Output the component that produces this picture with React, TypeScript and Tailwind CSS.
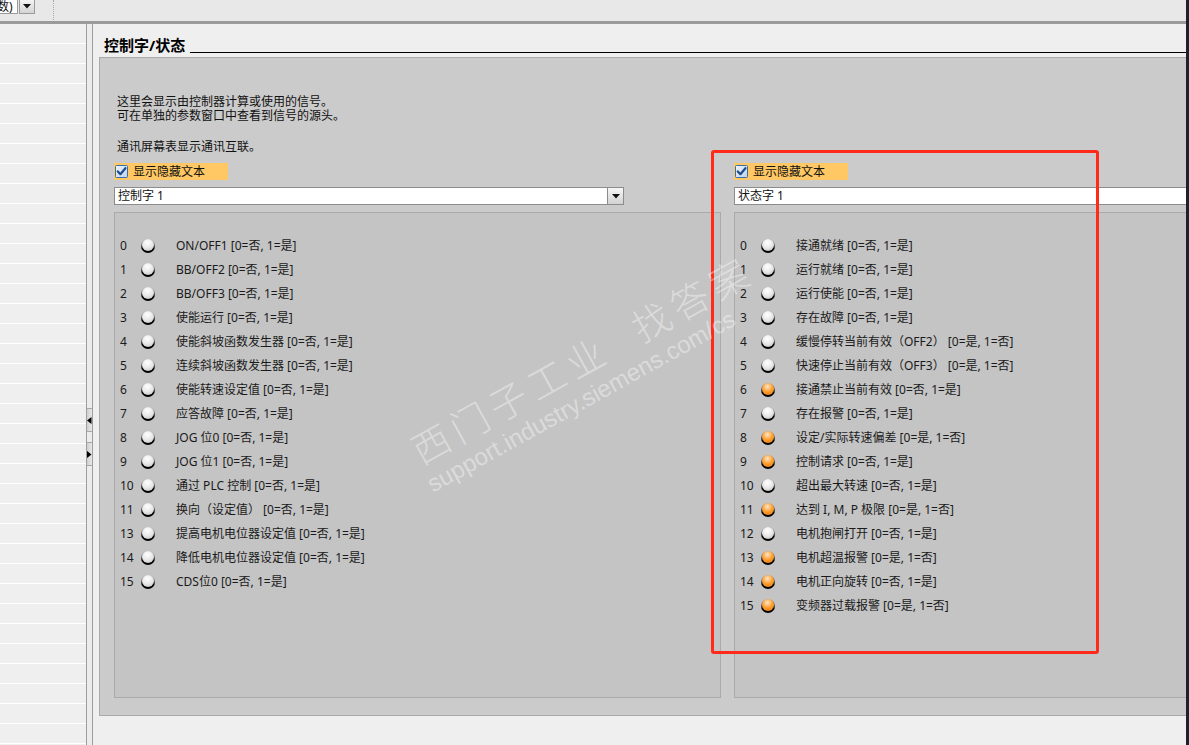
import React from 'react'

type Item = { n: number; label: string; on?: boolean }

const CONTROL: Item[] = [
  { n: 0, label: 'ON/OFF1 [0=否, 1=是]' },
  { n: 1, label: 'BB/OFF2 [0=否, 1=是]' },
  { n: 2, label: 'BB/OFF3 [0=否, 1=是]' },
  { n: 3, label: '使能运行 [0=否, 1=是]' },
  { n: 4, label: '使能斜坡函数发生器 [0=否, 1=是]' },
  { n: 5, label: '连续斜坡函数发生器 [0=否, 1=是]' },
  { n: 6, label: '使能转速设定值 [0=否, 1=是]' },
  { n: 7, label: '应答故障 [0=否, 1=是]' },
  { n: 8, label: 'JOG 位0 [0=否, 1=是]' },
  { n: 9, label: 'JOG 位1 [0=否, 1=是]' },
  { n: 10, label: '通过 PLC 控制 [0=否, 1=是]' },
  { n: 11, label: '换向（设定值） [0=否, 1=是]' },
  { n: 13, label: '提高电机电位器设定值 [0=否, 1=是]' },
  { n: 14, label: '降低电机电位器设定值 [0=否, 1=是]' },
  { n: 15, label: 'CDS位0 [0=否, 1=是]' },
]

const STATUS: Item[] = [
  { n: 0, label: '接通就绪 [0=否, 1=是]' },
  { n: 1, label: '运行就绪 [0=否, 1=是]' },
  { n: 2, label: '运行使能 [0=否, 1=是]' },
  { n: 3, label: '存在故障 [0=否, 1=是]' },
  { n: 4, label: '缓慢停转当前有效（OFF2） [0=是, 1=否]' },
  { n: 5, label: '快速停止当前有效（OFF3） [0=是, 1=否]' },
  { n: 6, label: '接通禁止当前有效 [0=否, 1=是]', on: true },
  { n: 7, label: '存在报警 [0=否, 1=是]' },
  { n: 8, label: '设定/实际转速偏差 [0=是, 1=否]', on: true },
  { n: 9, label: '控制请求 [0=否, 1=是]', on: true },
  { n: 10, label: '超出最大转速 [0=否, 1=是]' },
  { n: 11, label: '达到 I, M, P 极限 [0=是, 1=否]', on: true },
  { n: 12, label: '电机抱闸打开 [0=否, 1=是]' },
  { n: 13, label: '电机超温报警 [0=是, 1=否]', on: true },
  { n: 14, label: '电机正向旋转 [0=否, 1=是]', on: true },
  { n: 15, label: '变频器过载报警 [0=是, 1=否]', on: true },
]

// round indicator: grey ring fading to a black crescent at the bottom
function Led({ on }: { on?: boolean }) {
  return (
    <span className="relative block h-[14px] w-[14px] shrink-0 rounded-full bg-[linear-gradient(#a8a8a8,#6a6a6a_40%,#000_70%)]">
      <span
        className={`absolute left-[1px] top-0 h-[12px] w-[12px] rounded-full ${
          on
            ? 'bg-[radial-gradient(circle_at_45%_30%,#ffe4bf,#ff9c2e_50%,#e47506)]'
            : 'bg-[radial-gradient(circle_at_45%_30%,#ffffff,#e8e8e8_50%,#b8b8b8)]'
        }`}
      />
    </span>
  )
}

function CheckBox() {
  return (
    <svg width="13" height="13" viewBox="0 0 13 13" className="shrink-0">
      <defs>
        <linearGradient id="cbg" x1="0" y1="0" x2="1" y2="1">
          <stop offset="0" stopColor="#eef4fb" />
          <stop offset="1" stopColor="#bfd3ea" />
        </linearGradient>
      </defs>
      <rect x="0.5" y="0.5" width="12" height="12" rx="1" fill="url(#cbg)" stroke="#3c6ea6" />
      <path d="M2.8 6.4 L5.4 9.2 L10.4 3.2" fill="none" stroke="#1d4c8f" strokeWidth="2.2" strokeLinecap="round" strokeLinejoin="round" />
    </svg>
  )
}

function DropArrow() {
  return (
    <div className="flex h-full w-[16px] items-center justify-center border-l border-[#8c8c8c] bg-[linear-gradient(#f6f6f6,#d2d2d2)]">
      <svg width="8" height="5" viewBox="0 0 8 5">
        <path d="M0 0 H8 L4 4.5 Z" fill="#111" />
      </svg>
    </div>
  )
}

function Column({ title, items }: { title: string; items: Item[] }) {
  return (
    <div className="flex w-[607px] shrink-0 flex-col">
      <div className="flex h-[17px] w-[114px] items-center gap-[5px] bg-[#ffc864] pl-[1px]">
        <CheckBox />
        <span>显示隐藏文本</span>
      </div>
      <div className="mt-[7px] flex h-[18px] w-[510px] items-center border border-[#8c8c8c] bg-white">
        <span className="flex-1 pl-[3px] leading-[16px]">{title}</span>
        <DropArrow />
      </div>
      <div className="mt-[7px] h-[486px] border border-[#aaaaaa] bg-[#c4c4c4] pl-[5px] pt-[21px]">
        {items.map((it) => (
          <div key={it.n} className="flex h-[24px] items-center">
            <span className="w-[21px] text-[#1a1a1a]">{it.n}</span>
            <Led on={it.on} />
            <span className="ml-[21px] whitespace-nowrap text-[#1a1a1a]">{it.label}</span>
          </div>
        ))}
      </div>
    </div>
  )
}

export default function App() {
  return (
    <div className="relative flex h-[745px] w-[1189px] overflow-hidden bg-[#efefef] font-['Noto_Sans','Noto_Sans_CJK_SC',sans-serif] text-[12px] text-[#111]">
      <div className="flex min-w-0 flex-1 flex-col">
        {/* top toolbar */}
        <div className="flex h-[21px] shrink-0 items-start bg-[#e8e8e8]">
          <div className="flex h-[15px] -translate-y-[1px] items-center">
            <div className="flex h-full w-[18px] items-center border border-l-0 border-[#9a9a9a] bg-white leading-none">
              <span className="-ml-[3px]">数)</span>
            </div>
            <div className="ml-[1px] flex h-full w-[16px] items-center justify-center border border-[#9a9a9a] bg-[linear-gradient(#f4f4f4,#d4d4d4)]">
              <svg width="8" height="5" viewBox="0 0 8 5">
                <path d="M0 0 H8 L4 4.5 Z" fill="#111" />
              </svg>
            </div>
          </div>
          <div className="ml-[18px] h-[20px] border-l border-dotted border-[#a8a8a8]" />
        </div>
        <div className="h-[3px] shrink-0 bg-[#9a9a9a]" />

        <div className="flex min-h-0 flex-1">
          {/* left tree */}
          <div className="flex w-[87px] shrink-0 flex-col border-r border-[#9d9d9d] bg-[#efefef]">
            {Array.from({ length: 36 }).map((_, i) => (
              <div key={i} className="h-[20px] shrink-0 border-b border-white" />
            ))}
          </div>
          {/* splitter */}
          <div className="flex w-[6px] shrink-0 flex-col border-r border-[#9d9d9d] bg-[#ececec]">
            <div className="h-[384px]" />
            <div className="flex h-[24px] items-center border-y border-[#a8a8a8] bg-[linear-gradient(90deg,#cfcfcf,#e8e8e8)]">
              <svg width="5" height="7" viewBox="0 0 5 7">
                <path d="M4.5 0 V7 L0 3.5 Z" fill="#000" />
              </svg>
            </div>
            <div className="h-[10px]" />
            <div className="flex h-[24px] items-center border-y border-[#a8a8a8] bg-[linear-gradient(90deg,#cfcfcf,#e8e8e8)]">
              <svg width="5" height="7" viewBox="0 0 5 7">
                <path d="M0 0 V7 L4.5 3.5 Z" fill="#000" />
              </svg>
            </div>
          </div>

          {/* main content */}
          <div className="flex min-w-0 flex-1 flex-col overflow-hidden bg-[#efefef] pl-[6px]">
            <div className="ml-[5px] mt-[13px] flex h-[16px] shrink-0 items-end gap-[5px]">
              <span className="text-[15px] font-bold leading-[16px] text-black">控制字/状态</span>
              <div className="flex-1 border-b border-black" />
            </div>
            <div className="mt-[4px] flex h-[659px] w-[1200px] shrink-0 flex-col border border-[#aaaaaa] bg-[#cbcbcb] pl-[14px] pt-[37px]">
              <div className="ml-[3px] leading-[14px]">
                <div>这里会显示由控制器计算或使用的信号。</div>
                <div>可在单独的参数窗口中查看到信号的源头。</div>
                <div className="mt-[17px]">通讯屏幕表显示通讯互联。</div>
              </div>
              <div className="mt-[9px] flex gap-[13px]">
                <Column title="控制字 1" items={CONTROL} />
                <Column title="状态字 1" items={STATUS} />
              </div>
            </div>
          </div>
        </div>
      </div>
      <div className="w-[3px] shrink-0 bg-[#1e2030]" />

      {/* annotation */}
      <div className="pointer-events-none absolute left-[711px] top-[150px] h-[504px] w-[388px] rounded-[3px] border-[3px] border-[#ff2a1a]" />

      {/* watermark */}
      <div className="pointer-events-none absolute left-[424px] top-[430px] origin-bottom-left -rotate-[29deg] whitespace-nowrap text-[38px] font-light leading-[40px] tracking-[6px] text-white/40">
        西门子工业&nbsp;&nbsp;找答案
      </div>
      <div className="pointer-events-none absolute left-[436px] top-[470px] origin-bottom-left -rotate-[29deg] whitespace-nowrap font-['Liberation_Sans',sans-serif] text-[24px] leading-[28px] text-white/40">
        support.industry.siemens.com/cs
      </div>
    </div>
  )
}
